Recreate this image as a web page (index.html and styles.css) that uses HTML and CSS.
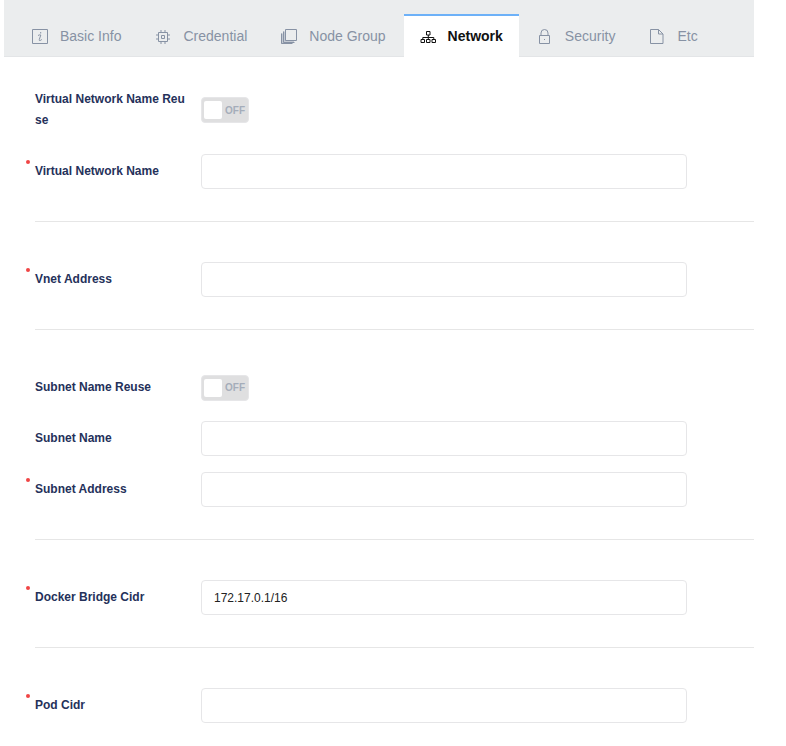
FILE: index.html
```html
<!DOCTYPE html>
<html lang="en">
<head>
<meta charset="utf-8">
<meta name="viewport" content="width=device-width, initial-scale=1">
<title>Network</title>
<link rel="stylesheet" href="styles.css">
</head>
<body>
<main class="panel">
  <nav class="tabs" role="tablist">
    <button class="tab" type="button" role="tab">
      <svg class="icon" viewBox="0 0 16 16" aria-hidden="true"><path d="M.5 1.500h15v14H.5z"/><path d="M6 7.500Q7.500 6.500 8.800 7L7.300 11.500Q7 13 8.200 12.500L9.800 11.500M8.700 4v1.500"/></svg>
      Basic Info
    </button>
    <button class="tab" type="button" role="tab">
      <svg class="icon" viewBox="0 0 16 16" aria-hidden="true"><path d="M3.500 4.500h9v9h-9zM6.500 7.500h3v3h-3z"/><path d="M6 4.500V2M10 4.500V2M6 13.500V16M10 13.500V16M3.500 7H1M3.500 11H1M12.500 7H15M12.500 11H15"/></svg>
      Credential
    </button>
    <button class="tab" type="button" role="tab">
      <svg class="icon" viewBox="0 0 16 16" aria-hidden="true"><path class="icon-shade" d="M2 3.500h2v8.500h9v2H2zM0 5.500h2v8.500h9v2H0z"/><path d="M4.500 1.500h11v11h-11z"/><path d="M2.500 3.500v11h11M.5 5.500v10h11"/></svg>
      Node Group
    </button>
    <button class="tab tab-active" type="button" role="tab" aria-selected="true">
      <svg class="icon" viewBox="0 0 16 16" aria-hidden="true"><path d="M6.500 3.500h3.500v3.500H6.500zM1 11.500h3.500v3H1zM6.500 11.500h3.500v3H6.500zM12 11.500h3.500v3H12z"/><path d="M8.300 7v4.500M2.800 11.500V9.500h11v2"/></svg>
      Network
    </button>
    <button class="tab" type="button" role="tab">
      <svg class="icon" viewBox="0 0 16 16" aria-hidden="true"><path d="M2.500 7.500h10v8h-10zM4 7.500V5a3.500 3.500 0 0 1 7 0v2.500M7 11.500h1"/></svg>
      Security
    </button>
    <button class="tab" type="button" role="tab">
      <svg class="icon" viewBox="0 0 16 16" aria-hidden="true"><path d="M1.500 1.500h8l4.500 4.500v9.500H1.500zM9.500 1.500V6H14"/></svg>
      Etc
    </button>
  </nav>

  <form class="form">
    <section class="group">
      <div class="row">
        <label class="name" for="vnet-reuse">Virtual Network Name Reuse</label>
        <span class="switch"><input id="vnet-reuse" type="checkbox" role="switch"><span class="state">OFF</span></span>
      </div>
      <div class="row">
        <label class="name required" for="vnet-name">Virtual Network Name</label>
        <input class="field" id="vnet-name" type="text">
      </div>
    </section>
    <section class="group">
      <div class="row">
        <label class="name required" for="vnet-address">Vnet Address</label>
        <input class="field" id="vnet-address" type="text">
      </div>
    </section>
    <section class="group">
      <div class="row">
        <label class="name" for="subnet-reuse">Subnet Name Reuse</label>
        <span class="switch"><input id="subnet-reuse" type="checkbox" role="switch"><span class="state">OFF</span></span>
      </div>
      <div class="row">
        <label class="name" for="subnet-name">Subnet Name</label>
        <input class="field" id="subnet-name" type="text">
      </div>
      <div class="row">
        <label class="name required" for="subnet-address">Subnet Address</label>
        <input class="field" id="subnet-address" type="text">
      </div>
    </section>
    <section class="group">
      <div class="row">
        <label class="name required" for="docker-cidr">Docker Bridge Cidr</label>
        <input class="field" id="docker-cidr" type="text" value="172.17.0.1/16">
      </div>
    </section>
    <section class="group">
      <div class="row">
        <label class="name required" for="pod-cidr">Pod Cidr</label>
        <input class="field" id="pod-cidr" type="text">
      </div>
    </section>
  </form>
</main>
</body>
</html>
```
FILE: styles.css
```css
* {
  box-sizing: border-box;
}

body {
  margin: 0;
  background: #fff;
  font-family: "Liberation Sans", Arial, sans-serif;
}

.panel {
  margin: 0 32px 0 4px;
}

.tabs {
  display: flex;
  gap: 2px;
  padding: 14px 12px 0;
  background: #ebedee;
  box-shadow: inset 0 -1px #e3e5e7;
}

.tab {
  display: flex;
  align-items: center;
  gap: 12px;
  height: 43px;
  padding: 0 16px 2px;
  border: 0;
  border-top: 2px solid transparent;
  background: none;
  color: #8792a4;
  font: 14px "Liberation Sans", Arial, sans-serif;
  white-space: nowrap;
}

.tab-active {
  border-top-color: #6db1f8;
  background: #fff;
  color: #111;
  font-weight: bold;
}

.icon {
  flex: none;
  width: 16px;
  height: 16px;
  fill: none;
  stroke: currentColor;
}

.icon-shade {
  fill: #c3c9d2;
  stroke: none;
}

.form {
  padding: 25px 0 0 31px;
}

.group {
  display: grid;
  gap: 16px;
  margin-bottom: 40px;
  padding-bottom: 32px;
  border-bottom: 1px solid #e6e6e6;
}

.group:last-child {
  margin-bottom: 0;
  padding-bottom: 20px;
  border-bottom: 0;
}

.row {
  display: grid;
  grid-template-columns: 150px minmax(0, 1fr);
  gap: 16px;
  align-items: center;
  padding-right: 67px;
}

.name {
  position: relative;
  padding: 7px 0;
  color: #25315a;
  font-size: 12px;
  font-weight: bold;
  line-height: 21px;
  word-break: break-all;
}

.required::before {
  content: "";
  position: absolute;
  top: 6px;
  left: -9px;
  width: 4px;
  height: 4px;
  border-radius: 50%;
  background: #f04545;
}

.field {
  width: 100%;
  height: 35px;
  padding: 0 12px;
  border: 1px solid #e6e6e8;
  border-radius: 4px;
  background: #fff;
  color: #222;
  font: 12px "Liberation Sans", Arial, sans-serif;
}

.switch {
  position: relative;
  display: flex;
  align-items: center;
  justify-content: flex-end;
  width: 48px;
  height: 26px;
  padding: 0 3px;
  border: 1px solid #e6e6e8;
  border-radius: 4px;
  background: #dfdfe0;
}

.switch input {
  position: absolute;
  inset: 0;
  margin: 0;
  appearance: none;
}

.switch input::before {
  content: "";
  position: absolute;
  top: 3px;
  left: 2px;
  width: 18px;
  height: 18px;
  border-radius: 2px;
  background: #fff;
}

.state {
  color: #a5adba;
  font-size: 10px;
  font-weight: bold;
}
```
